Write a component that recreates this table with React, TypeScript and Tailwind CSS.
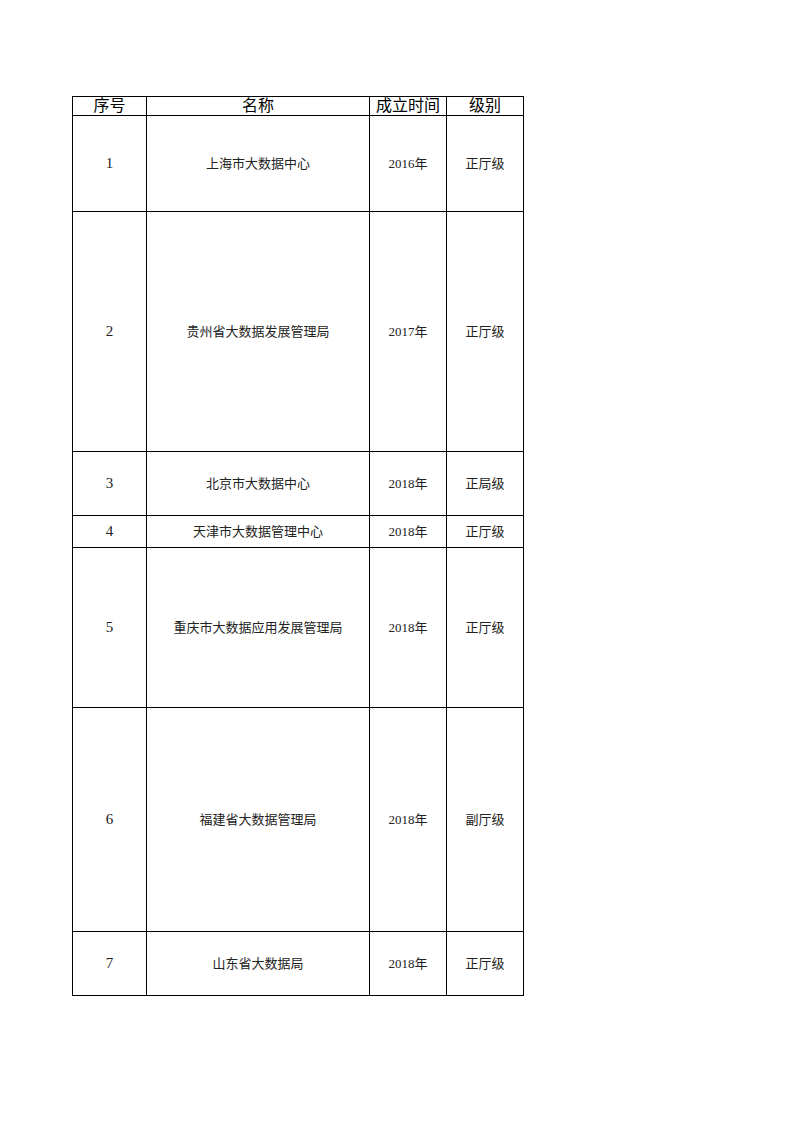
import React from "react";

const rows = [
  { no: "1", name: "上海市大数据中心", year: "2016年", level: "正厅级", h: "h-[96px]" },
  { no: "2", name: "贵州省大数据发展管理局", year: "2017年", level: "正厅级", h: "h-[240px]" },
  { no: "3", name: "北京市大数据中心", year: "2018年", level: "正局级", h: "h-[64px]" },
  { no: "4", name: "天津市大数据管理中心", year: "2018年", level: "正厅级", h: "h-[32px]" },
  { no: "5", name: "重庆市大数据应用发展管理局", year: "2018年", level: "正厅级", h: "h-[160px]" },
  { no: "6", name: "福建省大数据管理局", year: "2018年", level: "副厅级", h: "h-[224px]" },
  { no: "7", name: "山东省大数据局", year: "2018年", level: "正厅级", h: "h-[64px]" },
];

const cell =
  "flex items-center justify-center border-r border-b border-black box-border";

export default function App() {
  return (
    <div className="w-[793px] h-[1122px] bg-white pt-[96px] pl-[72px] font-['Liberation_Serif','Noto_Sans_CJK_SC',serif] text-black">
      <div className="grid grid-cols-[74px_223px_77px_77px] w-[452px] border-l border-t border-black">
        {/* header */}
        {["序号", "名称", "成立时间", "级别"].map((t) => (
          <div key={t} className={`${cell} h-[19px] text-[16px] leading-none`}>
            {t}
          </div>
        ))}

        {rows.map((r) => (
          <React.Fragment key={r.no}>
            <div className={`${cell} ${r.h} text-[15px] text-[#222]`}>{r.no}</div>
            <div className={`${cell} ${r.h} text-[13px] text-[#222]`}>{r.name}</div>
            <div className={`${cell} ${r.h} text-[13px] text-[#222]`}>{r.year}</div>
            <div className={`${cell} ${r.h} text-[13px] text-[#222]`}>{r.level}</div>
          </React.Fragment>
        ))}
      </div>
    </div>
  );
}
